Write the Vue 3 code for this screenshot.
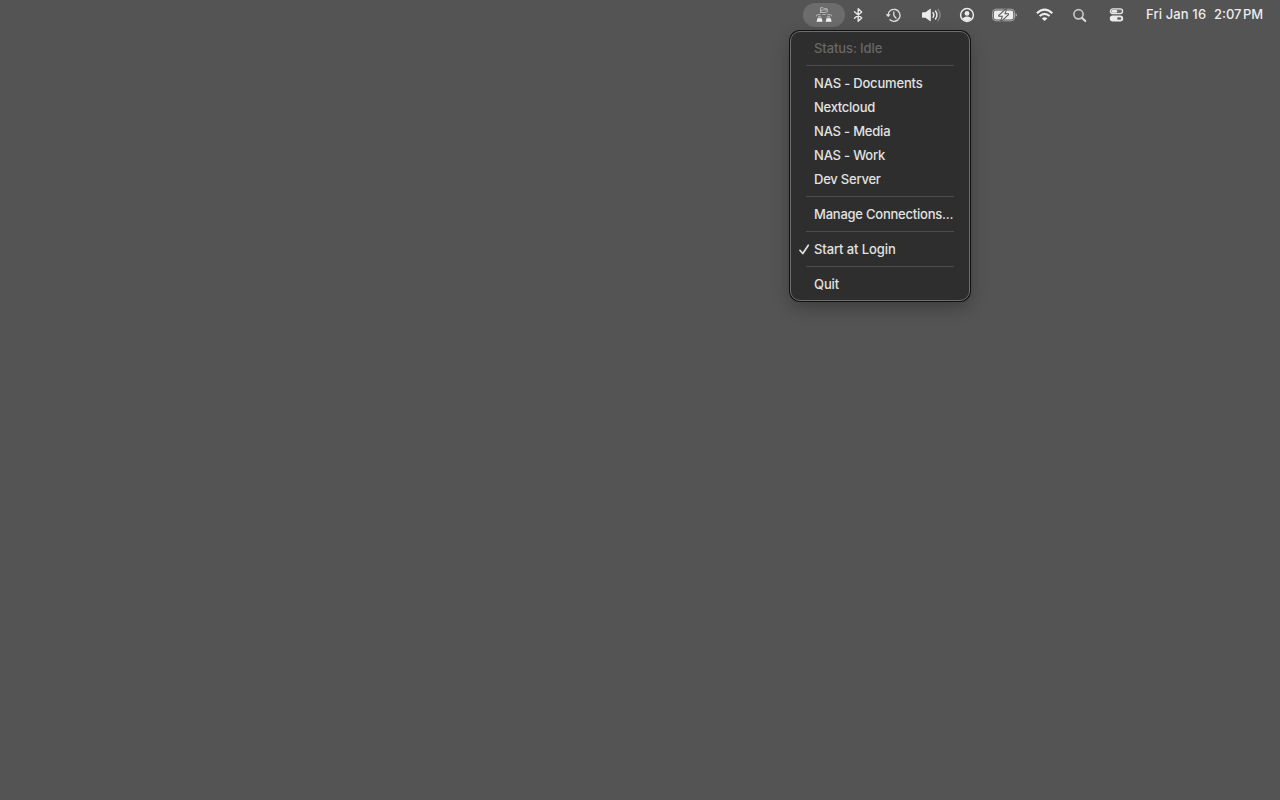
<script setup>
import { ref } from 'vue'

const connections = ref([
  { id: 0, name: 'NAS - Documents', spacing: -0.18 },
  { id: 1, name: 'Nextcloud', spacing: -0.28 },
  { id: 2, name: 'NAS - Media', spacing: -0.2 },
  { id: 3, name: 'NAS - Work', spacing: -0.2 },
  { id: 4, name: 'Dev Server', spacing: -0.22 },
])

const startAtLogin = ref(true)
</script>

<template>
  <div class="desktop">
    <header class="menubar">
      <div class="item app active">
        <svg width="18" height="18" viewBox="0 0 18 18">
          <path d="M5.5 6.5V1.700h2.600l1 1h3v1.300M5.500 6.500l1.300-2.500h6l-1 2.500z" fill="none" stroke="#bcbcbc" stroke-width="0.9" />
          <path d="M1.200 10.400q.2-1.900 2-1.900h2.500M16.800 10.400q-.2-1.900-2-1.900h-2.500M7.500 8.500h3" fill="none" stroke="#b0b0b0" stroke-width="1" />
          <path d="M3 9.800h3.200v2.400H3zM11.800 9.800H15v2.400h-3.200z" fill="#a0a0a0" />
          <path d="M2.500 12.200h4.200l.9 3.500H1.500zM11.500 12.200h4.200l1 3.500h-6.100z" fill="#f2f2f2" />
        </svg>
      </div>
      <div class="item bluetooth">
        <svg width="10" height="16" viewBox="-0.6 0 10 16">
          <path d="M.9 4.700L8.100 11 4.600 14.300V1.700L8.100 5 .9 11.300" fill="none" stroke="#e8e8e8" stroke-width="1.400" stroke-linejoin="round" stroke-linecap="round" />
        </svg>
      </div>
      <div class="item timemachine">
        <svg width="16" height="16" viewBox="0.500 -0.200 16 16">
          <path d="M2.500 8a6 6 0 1 1 2 4.600" fill="none" stroke="#dedede" stroke-width="1.350" stroke-linecap="round" />
          <path d="M.4 7.100h4.700L2.700 10z" fill="#e4e4e4" />
          <path d="M8.300 4.600v3.700l2.200 2.700" fill="none" stroke="#dedede" stroke-width="1.300" stroke-linecap="round" stroke-linejoin="round" />
        </svg>
      </div>
      <div class="item volume">
        <svg width="20" height="16" viewBox="0.300 0 20 16">
          <path d="M1 5.300h2.800L8.200 1.900q.9-.5.9.5v11.200q0 1-.9.5L3.800 10.700H1q-.8 0-.8-.8V6.100q0-.8.8-.8z" fill="#ececec" />
          <path d="M11.300 5.700q1.600 2.300 0 4.600" fill="none" stroke="#e6e6e6" stroke-width="1.450" stroke-linecap="round" />
          <path d="M13.800 4q2.900 4 0 8" fill="none" stroke="#e6e6e6" stroke-width="1.450" stroke-linecap="round" />
          <path d="M16.300 2.300q4.300 5.700 0 11.400" fill="none" stroke="#858585" stroke-width="1.350" stroke-linecap="round" />
        </svg>
      </div>
      <div class="item user">
        <svg width="16" height="16" viewBox="0 0 16 16">
          <circle cx="8" cy="8" r="6.400" fill="none" stroke="#ececec" stroke-width="1.500" />
          <circle cx="8" cy="6.400" r="2.400" fill="#ececec" />
          <path d="M3.600 12q.8-2.600 4.400-2.600t4.400 2.600Q10.500 14 8 14t-4.400-2z" fill="#ececec" />
        </svg>
      </div>
      <div class="item battery">
        <svg width="26" height="14" viewBox="0.400 0 26 14">
          <rect x="1" y="1.200" width="22" height="11.600" rx="3.400" fill="none" stroke="#a8a8a8" />
          <rect x="2.300" y="2.500" width="19.400" height="9" rx="2.200" fill="#ececec" />
          <path d="M24 5.200q1.500.5 1.500 1.800T24 8.800z" fill="#a4a4a4" />
          <path d="M14.300 1.500L7.500 7.800h3.900l-1.600 4.700 6.800-6.300h-3.900z" fill="#ececec" stroke="#545454" stroke-width="2" stroke-linejoin="round" paint-order="stroke" />
        </svg>
      </div>
      <div class="item wifi">
        <svg width="18" height="14" viewBox="0.400 0 18 14">
          <path d="M1.300 5.300q7.700-7.200 15.400 0" fill="none" stroke="#ececec" stroke-width="2.200" />
          <path d="M4 8.100q5-4.500 10 0" fill="none" stroke="#ececec" stroke-width="2" />
          <path d="M6.200 10.400q2.800-2.300 5.600 0L9 13.100z" fill="#ececec" />
        </svg>
      </div>
      <div class="item search">
        <svg width="16" height="16" viewBox="0.500 -0.300 16 16">
          <circle cx="7" cy="7" r="4.600" fill="none" stroke="#c4c4c4" stroke-width="1.700" />
          <path d="M10.600 10.600l3.200 3.200" stroke="#dadada" stroke-width="2.100" stroke-linecap="round" />
        </svg>
      </div>
      <div class="item control">
        <svg width="16" height="16" viewBox="0.500 0 16 16">
          <rect x="1.900" y="1.900" width="12.200" height="4.800" rx="2.400" fill="#6a6a6a" stroke="#e6e6e6" stroke-width="1.300" />
          <rect x="3.100" y="3" width="5.600" height="2.700" rx="1.300" fill="#ececec" />
          <rect x="1.300" y="8.500" width="13.400" height="6.100" rx="3.050" fill="#ececec" />
          <rect x="8.600" y="10.300" width="4.200" height="2.500" rx="1.250" fill="#666" />
        </svg>
      </div>
      <div class="clock">
        <span class="date">Fri Jan 16</span>
        <span class="time">2:07</span>
        <span class="period">PM</span>
      </div>
    </header>

    <div class="menu">
      <div class="row disabled">Status: Idle</div>
      <div class="separator"></div>
      <div
        v-for="item in connections"
        :key="item.id"
        class="row"
        :style="{ letterSpacing: item.spacing + 'px' }"
      >
        {{ item.name }}
      </div>
      <div class="separator"></div>
      <div class="row manage">Manage Connections...</div>
      <div class="separator"></div>
      <div class="row" @click="startAtLogin = !startAtLogin">
        <svg v-if="startAtLogin" class="check" width="12" height="12" viewBox="0 0 12 12">
          <path d="M1.900 7.300l2.900 3.200L10.300 2.300" fill="none" stroke="#e2e2e2" stroke-width="1.700" stroke-linecap="round" stroke-linejoin="round" />
        </svg>
        Start at Login
      </div>
      <div class="separator"></div>
      <div class="row">Quit</div>
    </div>
  </div>
</template>

<style>
body {
  margin: 0;
  background: #545454;
}
</style>

<style scoped>
.desktop {
  position: relative;
  width: 100%;
  height: 100vh;
  overflow: hidden;
  background: #545454;
  font-family: Inter, 'Liberation Sans', sans-serif;
  font-size: 13px;
  font-weight: 500;
  color: #e2e2e2;
}

.menubar {
  display: flex;
  align-items: center;
  justify-content: flex-end;
  height: 30px;
}

.item {
  display: flex;
  flex: none;
  align-items: center;
  justify-content: center;
  height: 24px;
}

.item svg {
  display: block;
  flex: none;
}

.app {
  width: 42px;
}

.active {
  border-radius: 12px;
  background: #6c6c6c;
}

.bluetooth {
  width: 26px;
}

.timemachine {
  width: 45px;
}

.volume {
  width: 31px;
}

.user {
  width: 40px;
}

.battery {
  width: 36px;
}

.wifi {
  width: 43px;
}

.search {
  width: 27px;
}

.control {
  width: 47px;
}

.clock {
  display: flex;
  flex: none;
  box-sizing: border-box;
  width: 140px;
  padding-left: 6px;
  line-height: 28px;
  height: 30px;
  color: #ececec;
  white-space: nowrap;
}

.date {
  width: 68px;
  letter-spacing: 0.12px;
}

.time {
  width: 29px;
}

.menu {
  position: absolute;
  top: 31px;
  left: 790px;
  box-sizing: border-box;
  width: 180px;
  padding: 4px 0;
  border: 1px solid #6e6e6e;
  border-radius: 10px;
  background: #2e2e2e;
  box-shadow: 0 0 0 1px #111, 0 6px 18px rgba(0, 0, 0, 0.28);
}

.row {
  position: relative;
  height: 24px;
  padding-left: 23px;
  line-height: 24px;
  letter-spacing: -0.1px;
  white-space: nowrap;
}

.manage {
  letter-spacing: -0.23px;
}

.disabled {
  color: #676767;
}

.separator {
  height: 1px;
  margin: 5px 15px;
  background: #4c4c4c;
}

.check {
  position: absolute;
  top: 6px;
  left: 7px;
}
</style>
